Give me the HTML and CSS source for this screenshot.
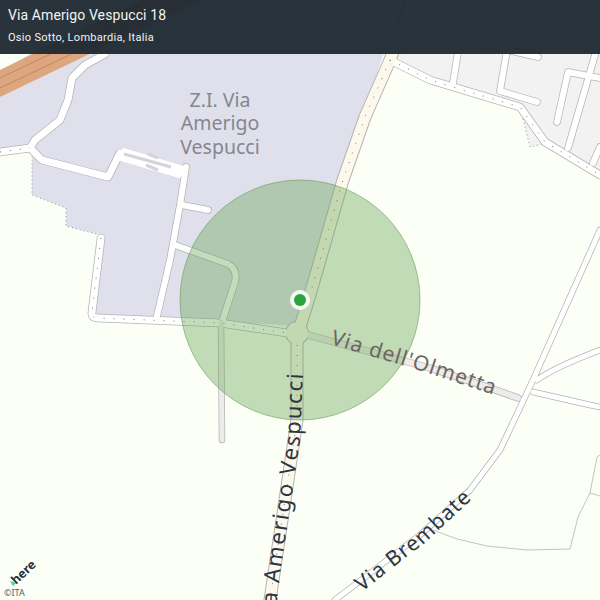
FILE: index.html
```html
<!DOCTYPE html>
<html lang="en">
<head>
    <meta charset="UTF-8">
    <meta name="viewport" content="width=device-width, initial-scale=1.0">
    <title>Via Amerigo Vespucci 18</title>
    <link rel="stylesheet" href="styles.css">
</head>
<body>

    <div class="map">
        <svg class="map-canvas" width="600" height="600" viewBox="0 0 600 600">
            <defs>
                <path id="pathVespucci" d="M263 720 L280 575 L300 440 L303 372"/>
                <path id="pathOlmetta" d="M330 344 L428 373 L518 403"/>
                <path id="pathBrembate" d="M362 592 L428 540 L498 475"/>
                <g id="sideRoads">
                    <path class="w7" d="M105 54 L85 65 L72 78 L68 100 L60 120 L35 140 L30 148 L42 160 L108 177 L120 153"/>
                    <polygon class="apron" points="123,148 186,167 180,178 118,160"/>
                    <path class="w6" d="M186 167 L180 205 L170 260 L157 316"/>
                    <path class="w6" d="M182 205 L208 210 M175 245 L228 264 Q238 270 235 282 L222 322"/>
                    <path class="w6" d="M460 40 L453 83 M507 50 L500 91 L537 102 M507 50 L538 57"/>
                    <path class="w6" d="M557 122 L568 72 L600 78 M595 55 L568 148 M600 147 L593 163"/>
                    <path class="w6" d="M612 0 L595 55 M520 0 L507 50 L470 42"/>
                    <path class="w5" d="M600 230 L533 380 L500 450 L470 490 L420 535 L335 600"/>
                    <path class="w5" d="M537 380 Q553 368 600 350 M533 392 L590 405 L600 407"/>
                    <path class="w7" d="M101 238 L92 312 Q91 318 98 318 L220 323 L287 333"/>
                    <path class="w7" d="M0 152 L30 148 M390 60 L430 80 L520 107 L545 142 L600 175"/>
                </g>
            </defs>

            <!-- Land areas -->
            <polygon class="area-industrial" points="0,0 412,0 382,58 297,326 226,322 92,318 100,235 66,226 66,208 32,195 32,160 30,148 0,152"/>
            <polygon class="area-residential" points="390,0 600,0 600,178 545,143 530,147 522,115 520,107 430,80 395,60"/>
            <polygon class="area-plain" points="0,0 210,0 30,54 0,72"/>
            <polygon class="motorway" points="142,0 202,0 0,97 0,70"/>
            <path class="motorway-line" d="M0 78 L165 0 M0 88 L185 0"/>

            <!-- Area edges -->
            <path class="area-edge" d="M100 235 L66 226 L66 208 L32 195 L32 160 M522 115 L530 147 L545 143"/>
            <path class="field-line" d="M433 530 L457 539 L487 546 L527 550 L570 549 L578 517 L590 493 L597 457 L600 455 M590 493 L600 496"/>

            <!-- Roads: casing first, then the fill on top -->
            <g class="road-casing">
                <use href="#sideRoads"/>
                <path class="w12" d="M412 0 L390 60 L365 117 L343 180 L310 295 L299 330 L297 345 L297 420 L270 600"/>
                <path class="w6" d="M308 335 L430 368 L487 387 L518 398"/>
                <path class="w5" d="M221 322 L222 440"/>
                <circle class="round" cx="297" cy="333" r="12"/>
            </g>
            <g class="road-fill">
                <use href="#sideRoads"/>
                <path class="w12 cream" d="M412 0 L390 60 L365 117 L343 180 L310 295 L299 330 L297 345 L297 420 L270 600"/>
                <path class="w6 grey" d="M308 335 L430 368 L487 387 L518 398"/>
                <path class="w5 grey" d="M221 322 L222 440"/>
                <circle class="round" cx="297" cy="333" r="11"/>
            </g>
            <path class="estate-bars" d="M124 154 L171 167 M148 154 L158 158 M146 165 L158 170"/>
            <path class="road-dots" d="M101 238 L92 312 Q91 318 98 318 L220 323 L287 333 M0 152 L30 148 M390 60 L430 80 L520 107 L545 142 L600 175 M390 60 L365 117 L343 180 L310 295 M297 345 L297 420 L270 600"/>

            <!-- Radius around the address -->
            <circle class="radius" cx="300" cy="300" r="120"/>

            <text class="label-zone" x="220" y="107">Z.I. Via</text>
            <text class="label-zone" x="220" y="130">Amerigo</text>
            <text class="label-zone" x="220" y="154">Vespucci</text>
            <text class="label-road label-long"><textPath href="#pathVespucci" startOffset="100%">Via Amerigo Vespucci</textPath></text>
            <text class="label-road label-minor"><textPath href="#pathOlmetta">Via  dell'Olmetta</textPath></text>
            <text class="label-road"><textPath href="#pathBrembate">Via  Brembate</textPath></text>

            <!-- Address pin -->
            <circle class="pin-halo" cx="300" cy="300" r="10"/>
            <circle class="pin-dot" cx="300" cy="300" r="6"/>

            <!-- Map logo -->
            <polygon class="logo-mark" points="10,581 16,583 13,586"/>
            <text class="logo-text" transform="translate(16,585) rotate(-43)">here</text>
        </svg>

        <div class="address-bar">
            <div class="address-street">Via Amerigo Vespucci 18</div>
            <div class="address-place">Osio Sotto, Lombardia, Italia</div>
        </div>

        <div class="copyright">©ITA</div>
    </div>

</body>
</html>
```

FILE: styles.css
```css
body {
    margin: 0;
    font-family: "Noto Sans", sans-serif;
}

.map {
    position: relative;
    width: 600px;
    height: 600px;
    overflow: hidden;
    background-color: #fbfff6;
}

.map-canvas {
    display: block;
}

/* Land areas */
.area-industrial {
    fill: #e0e0ec;
}

.area-residential {
    fill: #f3f2f2;
}

.area-plain {
    fill: #fbfff6;
}

.motorway {
    fill: #dda67e;
}

.motorway-line {
    fill: none;
    stroke: #b98a68;
    stroke-width: 1;
}

.area-edge {
    fill: none;
    stroke: #8d8d8d;
    stroke-width: 1;
    stroke-dasharray: 1 3;
}

.field-line {
    fill: none;
    stroke: #c2c6bd;
    stroke-width: 1;
}

/* Roads */
.road-casing,
.road-fill {
    fill: none;
    stroke-linecap: round;
    stroke-linejoin: round;
}

.road-casing {
    --w5: 6.5px;
    --w6: 7.5px;
    --w7: 8.5px;
    --w12: 13px;
    --apron: #b4b4b4;
    stroke: #b4b4b4;
}

.road-fill {
    --w5: 5px;
    --w6: 6px;
    --w7: 7px;
    --w12: 11px;
    --apron: #ffffff;
    stroke: #ffffff;
}

.w5 { stroke-width: var(--w5); }
.w6 { stroke-width: var(--w6); }
.w7 { stroke-width: var(--w7); }
.w12 { stroke-width: var(--w12); }

.apron {
    fill: var(--apron);
    stroke-width: 1px;
}

.road-casing .round {
    fill: #b4b4b4;
    stroke: none;
}

.road-fill .round {
    fill: #fdf8ec;
    stroke: none;
}

.road-fill .cream {
    stroke: #fdf8ec;
}

.road-fill .grey {
    stroke: #eeecea;
}

.road-dots {
    fill: none;
    stroke: #777777;
    stroke-width: 1;
    stroke-dasharray: 1 9;
}

.estate-bars {
    fill: none;
    stroke: #d4d4d8;
    stroke-width: 3;
}

.radius {
    fill: rgba(100, 160, 80, 0.38);
    stroke: rgba(90, 140, 70, 0.5);
    stroke-width: 1;
}

/* Map labels */
.label-zone {
    font-size: 19.5px;
    fill: #86868e;
    text-anchor: middle;
}

.label-road {
    font-size: 21px;
    letter-spacing: 1px;
    fill: #2c3542;
}

.label-long {
    font-size: 22px;
    letter-spacing: 1.8px;
    text-anchor: end;
}

.label-minor {
    fill: #6d6662;
}

.pin-halo {
    fill: rgba(255, 255, 255, 0.85);
}

.pin-dot {
    fill: #2ba43c;
}

.logo-mark {
    fill: #45c9b5;
}

.logo-text {
    font-size: 12.5px;
    font-weight: 700;
    fill: #2a3440;
}

/* Address header */
.address-bar {
    position: absolute;
    top: 0;
    left: 0;
    right: 0;
    height: 54px;
    padding: 5px 8px 0;
    box-sizing: border-box;
    background-color: rgba(28, 40, 50, 0.95);
    color: #f2f4f5;
    font-family: Roboto, sans-serif;
}

.address-street {
    font-size: 14px;
    line-height: 20px;
    letter-spacing: 0.1px;
}

.address-place {
    margin-top: 5px;
    font-size: 11px;
    line-height: 16px;
    letter-spacing: 0.3px;
}

.copyright {
    position: absolute;
    left: 4px;
    bottom: 2px;
    font-size: 9px;
    line-height: 11px;
    color: #555c62;
}
```
